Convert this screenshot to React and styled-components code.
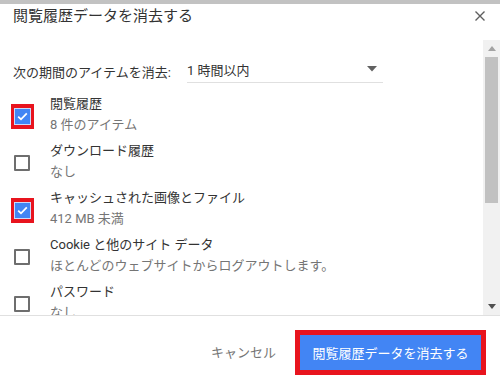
import React from 'react'
import styled, { createGlobalStyle } from 'styled-components'

const Global = createGlobalStyle`
  body {
    margin: 0;
    background: #fff;
    font-family: Roboto, "Noto Sans CJK JP", sans-serif;
  }
`

const Dialog = styled.div`
  width: 500px;
  height: 387px;
  box-sizing: border-box;
  border-top: 4px solid #c2c2c2;
  background: #fff;
  display: flex;
  flex-direction: column;
  overflow: hidden;
`

const Header = styled.div`
  height: 36px;
  display: flex;
  align-items: flex-start;
  justify-content: space-between;
  padding: 0 14px 0 13px;
`

const Title = styled.h1`
  margin: 2px 0 0;
  font-size: 15px;
  font-weight: 400;
  line-height: 20px;
  color: #333;
`

const Close = styled.button`
  border: 0;
  background: none;
  padding: 0;
  margin-top: 6px;
  width: 12px;
  height: 12px;
  display: flex;
  align-items: center;
  justify-content: center;
`

const Body = styled.div`
  height: 275px;
  display: flex;
  border-bottom: 1px solid #e0e0e0;
`

const Content = styled.div`
  flex: 1;
  overflow: hidden;
  padding: 16px 0 0 0;
`

const PeriodRow = styled.div`
  display: flex;
  align-items: center;
  padding-left: 13px;
  height: 27px;
`

const PeriodLabel = styled.span`
  font-size: 13px;
  color: #333;
  width: 174px;
  margin-top: 3px;
`

const Select = styled.div`
  width: 196px;
  height: 26px;
  box-sizing: border-box;
  border-bottom: 1px solid #e0e0e0;
  display: flex;
  align-items: center;
  justify-content: space-between;
  font-size: 13px;
  color: #333;
  padding-right: 6px;
`

const List = styled.div`
  margin-top: 7px;
`

const Row = styled.div`
  height: 47px;
  box-sizing: border-box;
  padding: 3px 0 2px;
  display: flex;
  align-items: center;
`

const BoxCell = styled.div`
  width: 50px;
  display: flex;
  justify-content: center;
  padding-right: 6px;
  box-sizing: border-box;
  margin-top: 4px;
`

const Highlight = styled.div`
  border: solid #e8141e;
  border-width: 4px 3px;
  display: flex;
`

const Checked = styled.div`
  width: 15px;
  height: 15px;
  background: #4285f4;
  border: 1px solid #c9dafc;
  display: flex;
  align-items: center;
  justify-content: center;
`

const Unchecked = styled.div`
  width: 12px;
  height: 12px;
  border: 2px solid #6e6e6e;
  border-radius: 1px;
`

const Texts = styled.div`
  display: flex;
  flex-direction: column;
  white-space: nowrap;
`

const Label = styled.span`
  font-size: 13px;
  line-height: 21px;
  color: ${p => (p.sub ? '#757575' : '#333')};
`

const Scrollbar = styled.div`
  width: 17px;
  background: #f1f1f1;
  display: flex;
  flex-direction: column;
  align-items: center;
`

const Arrow = styled.div`
  height: 17px;
  display: flex;
  align-items: center;
  justify-content: center;
`

const Track = styled.div`
  flex: 1;
  width: 100%;
  display: flex;
  justify-content: center;
`

const Thumb = styled.div`
  width: 13px;
  height: 146px;
  background: #c1c1c1;
`

const Footer = styled.div`
  flex: 1;
  display: flex;
  align-items: center;
  justify-content: flex-end;
  padding-right: 14px;
  gap: 19px;
`

const Cancel = styled.button`
  border: 0;
  background: none;
  padding: 0;
  font: inherit;
  font-size: 13px;
  color: #757575;
`

const PrimaryFrame = styled.div`
  border: 5px solid #e8141e;
  display: flex;
  margin-top: 1px;
`

const Primary = styled.button`
  border: 0;
  width: 181px;
  height: 35px;
  background: #4285f4;
  color: #fff;
  font: inherit;
  font-size: 13px;
  padding: 0;
`

const items = [
  { label: '閲覧履歴', sub: '8 件のアイテム', checked: true },
  { label: 'ダウンロード履歴', sub: 'なし' },
  { label: 'キャッシュされた画像とファイル', sub: '412 MB 未満', checked: true },
  { label: 'Cookie と他のサイト データ', sub: 'ほとんどのウェブサイトからログアウトします。' },
  { label: 'パスワード', sub: 'なし' },
]

const Check = ({ on }) =>
  on ? (
    <Highlight>
      <Checked>
        <svg width="11" height="9" viewBox="0 0 11 9">
          <path d="M1.2 4.6 L4 7.3 L9.8 1.4" fill="none" stroke="#fff" strokeWidth="1.8" />
        </svg>
      </Checked>
    </Highlight>
  ) : (
    <Unchecked />
  )

export default function App() {
  return (
    <>
      <Global />
      <Dialog>
        <Header>
          <Title>閲覧履歴データを消去する</Title>
          <Close aria-label="閉じる">
            <svg width="10" height="10" viewBox="0 0 10 10">
              <path d="M0.5 0.5 L9.5 9.5 M9.5 0.5 L0.5 9.5" stroke="#5f5f5f" strokeWidth="1.4" />
            </svg>
          </Close>
        </Header>
        <Body>
          <Content>
            <PeriodRow>
              <PeriodLabel>次の期間のアイテムを消去:</PeriodLabel>
              <Select>
                <span>1 時間以内</span>
                <svg width="10" height="6" viewBox="0 0 10 6">
                  <path d="M0 0 H10 L5 5.5 Z" fill="#616161" />
                </svg>
              </Select>
            </PeriodRow>
            <List>
              {items.map(it => (
                <Row key={it.label}>
                  <BoxCell>
                    <Check on={it.checked} />
                  </BoxCell>
                  <Texts>
                    <Label>{it.label}</Label>
                    <Label sub>{it.sub}</Label>
                  </Texts>
                </Row>
              ))}
            </List>
          </Content>
          <Scrollbar>
            <Arrow>
              <svg width="8" height="5" viewBox="0 0 8 5">
                <path d="M0 5 H8 L4 0 Z" fill="#a3a3a3" />
              </svg>
            </Arrow>
            <Track>
              <Thumb />
            </Track>
            <Arrow>
              <svg width="8" height="5" viewBox="0 0 8 5">
                <path d="M0 0 H8 L4 5 Z" fill="#505050" />
              </svg>
            </Arrow>
          </Scrollbar>
        </Body>
        <Footer>
          <Cancel>キャンセル</Cancel>
          <PrimaryFrame>
            <Primary>閲覧履歴データを消去する</Primary>
          </PrimaryFrame>
        </Footer>
      </Dialog>
    </>
  )
}
